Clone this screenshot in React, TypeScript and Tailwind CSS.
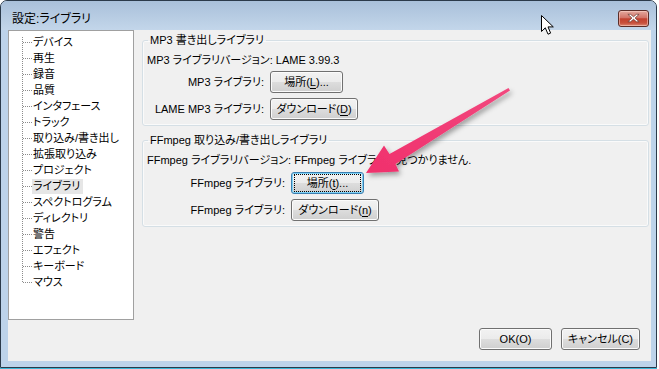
import clsx from "clsx";
import { ReactNode } from "react";

const TREE_ITEMS = [
  "デバイス",
  "再生",
  "録音",
  "品質",
  "インタフェース",
  "トラック",
  "取り込み/書き出し",
  "拡張取り込み",
  "プロジェクト",
  "ライブラリ",
  "スペクトログラム",
  "ディレクトリ",
  "警告",
  "エフェクト",
  "キーボード",
  "マウス",
];

const SELECTED = "ライブラリ";

const Key = ({ k }: { k: string }) => <span className="underline underline-offset-[2px]">{k}</span>;

const WinButton = ({
  children,
  className,
  focused,
}: {
  children: ReactNode;
  className?: string;
  focused?: boolean;
}) => (
  <button
    className={clsx(
      "h-[22px] rounded-[3px] border flex items-center justify-center text-black leading-[14px]",
      "bg-[linear-gradient(#f2f2f2_0%,#ebebeb_50%,#dddddd_51%,#cfcfcf_100%)]",
      focused
        ? "border-[#3c7fb1] shadow-[inset_0_0_0_1px_#7fd3f7]"
        : "border-[#707070] shadow-[inset_0_0_0_1px_#fbfbfb]",
      className
    )}
  >
    {focused ? (
      <span className="flex items-center justify-center w-[calc(100%-6px)] h-[16px] outline outline-1 outline-dotted outline-black">
        {children}
      </span>
    ) : (
      children
    )}
  </button>
);

const TreeLines = () => (
  <svg width="23" height="256" className="shrink-0" shapeRendering="crispEdges">
    <line x1="13.5" y1="3" x2="13.5" y2="248" stroke="#8c8c8c" strokeDasharray="1 1" />
    {TREE_ITEMS.map((_, i) => (
      <line
        key={i}
        x1="14"
        y1={16 * i + 8.5}
        x2="23"
        y2={16 * i + 8.5}
        stroke="#8c8c8c"
        strokeDasharray="1 1"
      />
    ))}
  </svg>
);

const Tree = () => (
  <div className="w-[126px] h-[290px] shrink-0 border border-[#a0a0a0] bg-white pt-[3px]">
    <div className="flex">
      <TreeLines />
      <ul className="flex flex-col">
        {TREE_ITEMS.map((item) => (
          <li key={item} className="h-[16px] flex items-center">
            <span
              className={clsx(
                "leading-[15px] pl-[1px] pr-[3px] whitespace-nowrap",
                item === SELECTED && "bg-[#e6e6e6]"
              )}
            >
              {item}
            </span>
          </li>
        ))}
      </ul>
    </div>
  </div>
);

const GroupBox = ({ title, children }: { title: string; children: ReactNode }) => (
  <fieldset className="border border-[#d5dfe5] rounded-[3px] px-[4px] pb-[5px] shadow-[inset_0_0_0_1px_#fafafa]">
    <legend className="ml-[1px] px-[2px] leading-[14px] text-black">{title}</legend>
    {children}
  </fieldset>
);

const FieldRow = ({ label, labelW, children }: { label: string; labelW: string; children: ReactNode }) => (
  <div className="flex items-center gap-[6px] h-[22px]">
    <span className={clsx("text-right whitespace-nowrap leading-[16px]", labelW)}>{label}</span>
    {children}
  </div>
);

const Arrow = () => (
  <svg
    className="absolute inset-0 pointer-events-none"
    width="659"
    height="369"
    viewBox="0 0 659 369"
  >
    <defs>
      <linearGradient id="pink" x1="0" y1="1" x2="1" y2="0">
        <stop offset="0" stopColor="#f0306c" />
        <stop offset="1" stopColor="#f2487e" />
      </linearGradient>
      <filter id="shadow" x="-20%" y="-20%" width="140%" height="140%">
        <feDropShadow dx="2" dy="3" stdDeviation="2.5" floodColor="#000" floodOpacity="0.35" />
      </filter>
    </defs>
    <polygon
      points="366,173 384,145.6 389.5,154 508.5,88 510,90.5 395.5,164 399,171.5"
      fill="url(#pink)"
      filter="url(#shadow)"
    />
  </svg>
);

const Cursor = () => (
  <svg className="absolute left-[541px] top-[15px] pointer-events-none" width="14" height="21" viewBox="0 0 14 21">
    <path
      d="M0.5 0.5 L0.5 16.5 L4.3 12.8 L7 19.2 L9.6 18.1 L7 11.9 L12.3 11.9 Z"
      fill="#fff"
      stroke="#000"
      strokeWidth="1"
      strokeLinejoin="miter"
    />
  </svg>
);

const CloseButton = () => (
  <button className="mt-[9px] mr-[7px] w-[31px] h-[17px] rounded-[3px] border border-[#5b2d28] bg-[linear-gradient(#e4a89e_0%,#d27468_45%,#c2412f_52%,#c8503c_80%,#dc8874_100%)] shadow-[inset_0_0_0_1px_rgba(255,220,210,0.5)] flex items-center justify-center">
    <svg width="31" height="17" viewBox="0 0 31 17">
      <path
        d="M9.5 4 L12.3 4 L15.5 6.6 L18.7 4 L21.5 4 L17.2 8 L21.5 12 L18.7 12 L15.5 9.4 L12.3 12 L9.5 12 L13.8 8 Z"
        fill="#fff"
        stroke="#6a3a33"
        strokeWidth="0.8"
      />
    </svg>
  </button>
);

export default function App() {
  return (
    <div className="relative w-[659px] h-[369px] bg-white overflow-hidden font-['Liberation_Sans','Noto_Sans_CJK_JP',sans-serif] text-[11px] text-black [font-feature-settings:'palt']">
      <div className="w-[657px] h-[368px] border border-[#2b3a4a] rounded-t-[7px] bg-[#bdd3ea] flex flex-col overflow-hidden">
        {/* title bar */}
        <div className="h-[29px] shrink-0 flex items-start justify-between bg-[linear-gradient(#a9c0da,#c3d6ea)]">
          <span className="ml-[11px] mt-[11px] leading-[14px] text-[12px]">設定:ライブラリ</span>
          <CloseButton />
        </div>

        {/* client */}
        <div className="flex-1 ml-[7px] mr-[5px] mb-[6px] bg-[#f0f0f0] flex flex-col">
          <div className="flex h-[290px]">
            <Tree />
            <div className="flex-1 ml-[8px] mr-[2px] pt-[3px] flex flex-col gap-[7px]">
              <GroupBox title="MP3 書き出しライブラリ">
                <div className="mt-[5px] h-[16px] leading-[16px] whitespace-nowrap">
                  MP3 ライブラリバージョン: LAME 3.99.3
                </div>
                <div className="mt-[3px] flex flex-col gap-[5px]">
                  <FieldRow label="MP3 ライブラリ:" labelW="w-[117px]">
                    <WinButton className="w-[73px]">
                      場所(<Key k="L" />)...
                    </WinButton>
                  </FieldRow>
                  <FieldRow label="LAME MP3 ライブラリ:" labelW="w-[117px]">
                    <WinButton className="w-[88px]">
                      ダウンロード(<Key k="D" />)
                    </WinButton>
                  </FieldRow>
                </div>
              </GroupBox>

              <GroupBox title="FFmpeg 取り込み/書き出しライブラリ">
                <div className="mt-[5px] h-[16px] leading-[16px] whitespace-nowrap">
                  FFmpeg ライブラリバージョン: FFmpeg ライブラリが見つかりません.
                </div>
                <div className="mt-[4px] flex flex-col gap-[5px]">
                  <FieldRow label="FFmpeg ライブラリ:" labelW="w-[138px]">
                    <WinButton className="w-[73px]" focused>
                      場所(<Key k="t" />)...
                    </WinButton>
                  </FieldRow>
                  <FieldRow label="FFmpeg ライブラリ:" labelW="w-[138px]">
                    <WinButton className="w-[88px]">
                      ダウンロード(<Key k="n" />)
                    </WinButton>
                  </FieldRow>
                </div>
              </GroupBox>
            </div>
          </div>

          <div className="mt-[8px] flex justify-end gap-[9px] pr-[11px]">
            <WinButton className="w-[73px]">OK(O)</WinButton>
            <WinButton className="w-[79px]">キャンセル(C)</WinButton>
          </div>
        </div>
      </div>
      <div className="w-[657px] h-[1px] bg-[#3cb8d8]" />

      <Cursor />
      <Arrow />
    </div>
  );
}
